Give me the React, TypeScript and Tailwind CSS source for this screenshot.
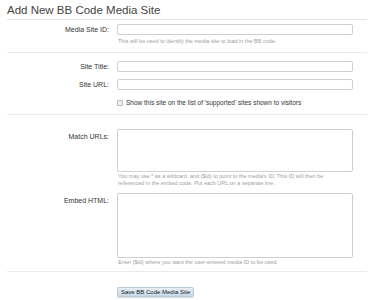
import React from "react";

function Row({
  label,
  children,
  tall,
}: {
  label: string;
  children: React.ReactNode;
  tall?: boolean;
}) {
  return (
    <div className="flex gap-[8px]">
      <div
        className={`w-[102px] shrink-0 text-right text-[7px] text-[#333] leading-[11px] ${
          tall ? "pt-[2px]" : ""
        }`}
      >
        {label}
      </div>
      <div className="w-[236px] flex flex-col">{children}</div>
    </div>
  );
}

function Hint({ children }: { children: React.ReactNode }) {
  return (
    <p className="mt-[1px] pl-[1px] pr-[20px] text-[5.5px] leading-[7px] text-[#a0a0a0]">
      {children}
    </p>
  );
}

export default function App() {
  return (
    <div
      className="w-[374px] h-[300px] bg-white px-[7px]"
      style={{ fontFamily: '"Liberation Sans", Arial, sans-serif' }}
    >
      <h1 className="h-[20px] pt-[3px] border-b border-[#e6e6e6] text-[11.5px] leading-[15px] text-[#444]">
        Add New BB Code Media Site
      </h1>

      <div className="pt-[4px] pb-[7px] border-b border-[#e4ecf1]">
        <Row label="Media Site ID:">
          <input className="h-[11px] border border-[#cfcfcf] rounded-[2px] bg-white" />
          <p className="mt-[3px] pl-[1px] text-[5.5px] leading-[7px] text-[#a0a0a0]">
            This will be used to identify the media site to load in the BB code.
          </p>
        </Row>
      </div>

      <div className="pt-[8px] pb-[8px] border-b border-[#e4ecf1] flex flex-col gap-[7px]">
        <Row label="Site Title:">
          <input className="h-[11px] border border-[#cfcfcf] rounded-[2px] bg-white" />
        </Row>
        <Row label="Site URL:">
          <input className="h-[11px] border border-[#cfcfcf] rounded-[2px] bg-white" />
        </Row>
        <div className="mt-[2px] pl-[110px] flex items-center gap-[3px] h-[7px]">
          <span className="w-[6px] h-[6px] border border-[#bdbdbd] bg-[#eeeeee] rounded-[1px]" />
          <span className="text-[6.5px] leading-[7px] text-[#333]">
            Show this site on the list of 'supported' sites shown to visitors
          </span>
        </div>
      </div>

      <div className="pt-[14px] pb-[5px] border-b border-[#e4ecf1]">
        <Row label="Match URLs:" tall>
          <textarea className="h-[43px] resize-none border border-[#cfcfcf] rounded-[2px] bg-white" />
          <Hint>
            You may use * as a wildcard, and {"{$id}"} to point to the media's ID. This ID
            will then be referenced in the embed code. Put each URL on a separate line.
          </Hint>
        </Row>
        <div className="mt-[6px]">
          <Row label="Embed HTML:" tall>
            <textarea className="h-[65px] resize-none border border-[#cfcfcf] rounded-[2px] bg-white" />
            <Hint>Enter {"{$id}"} where you want the user-entered media ID to be used.</Hint>
          </Row>
        </div>
      </div>

      <div className="pt-[5px] pl-[110px]">
        <button className="h-[10px] px-[3px] rounded-[2px] border border-[#b9cbd8] bg-gradient-to-b from-[#e6eff6] to-[#c7d9e6] shadow-[0_1px_1px_rgba(0,0,0,0.15)] text-[6px] leading-[8px] text-[#222]">
          Save BB Code Media Site
        </button>
      </div>
    </div>
  );
}
